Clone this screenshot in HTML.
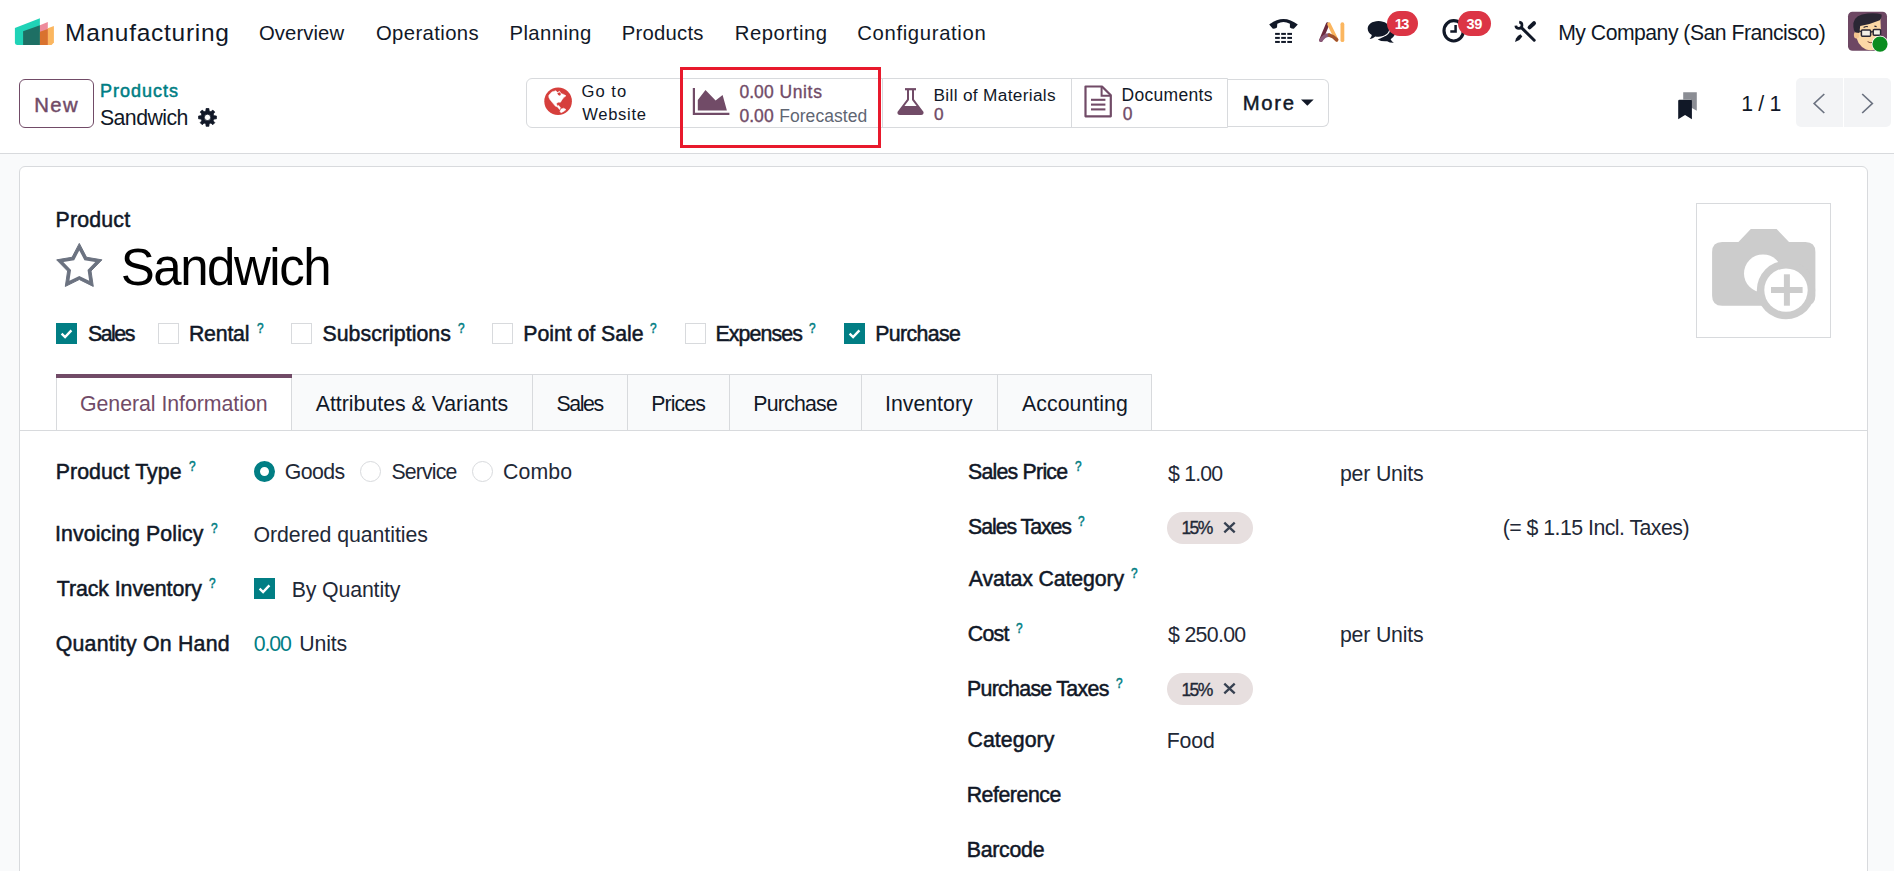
<!DOCTYPE html>
<html lang="en"><head><meta charset="utf-8"><title>Sandwich - Odoo</title>
<style>
html,body{margin:0;padding:0;}
body{width:1894px;height:871px;overflow:hidden;background:#f9fafb;font-family:"Liberation Sans",sans-serif;color:#111827;}
#app{position:relative;width:1894px;height:871px;overflow:hidden;}
.t{position:absolute;white-space:nowrap;line-height:1;}
.abs{position:absolute;box-sizing:border-box;}
svg{position:absolute;overflow:visible;}
.topbar{left:0;top:0;width:1894px;height:154px;background:#fff;border-bottom:1px solid #d8dadd;}
.sheet{left:19px;top:166px;width:1849px;height:720px;background:#fff;border:1px solid #d8dadd;border-radius:6px 6px 0 0;}
.btn-new{left:19px;top:79px;width:75px;height:49px;border:1px solid #714b67;border-radius:6px;background:#fff;}
.statgrp{left:526px;top:78px;width:702px;height:50px;border:1px solid #d8dadd;border-radius:6px 0 0 6px;background:#fff;}
.statdiv{top:78px;width:1px;height:50px;background:#d8dadd;}
.btn-more{left:1228px;top:79px;width:101px;height:48px;border:1px solid #d8dadd;border-left:none;border-radius:0 6px 6px 0;background:#fff;}
.redbox{left:680px;top:67px;width:201px;height:81px;border:3px solid #e8192c;}
.pager{left:1796px;top:78px;width:95px;height:49px;background:#f3f4f6;border-radius:5px;}
.pagerdiv{left:1843px;top:78px;width:1px;height:49px;background:#fff;}
.badge{height:25.3px;border-radius:12.7px;background:#dc3545;}
.cb{width:21px;height:21px;border:1px solid #d8dadd;background:#fff;}
.cb.on{border-color:#017e84;background:#017e84;}
.radio{width:21px;height:21px;border-radius:50%;border:1px solid #d8dadd;background:#fff;}
.radio.on{border:6px solid #017e84;}
.tab{top:374px;height:57px;border:1px solid #d8dadd;background:#f9fafb;}
.tab.active{background:#fff;}
.tabline{left:20px;top:430px;width:1847px;height:1px;background:#d8dadd;}
.pill{height:31.7px;border-radius:16px;background:#e7dfdf;}
.imgbox{left:1696px;top:203px;width:135px;height:135px;border:1px solid #d8dadd;background:#fff;}

</style></head>
<body>
<div id="app">
<div class="abs topbar"></div>
<div class="abs sheet"></div>
<div class="abs btn-new"></div>
<div class="abs statgrp"></div>
<div class="abs statdiv" style="left:882px"></div>
<div class="abs statdiv" style="left:1071px"></div>
<div class="abs btn-more"></div>
<div class="abs redbox"></div>
<div class="abs pager"></div><div class="abs pagerdiv"></div>
<div class="abs cb on" style="left:56px;top:323px"></div><svg style="left:56px;top:323px" width="21" height="21" viewBox="0 0 21 21"><path d="M5.6 10.6 L9.1 14 L15.4 7.4" fill="none" stroke="#fff" stroke-width="2.4" stroke-linecap="butt" stroke-linejoin="miter"/></svg>
<div class="abs cb" style="left:158px;top:323px"></div>
<div class="abs cb" style="left:291px;top:323px"></div>
<div class="abs cb" style="left:492px;top:323px"></div>
<div class="abs cb" style="left:685px;top:323px"></div>
<div class="abs cb on" style="left:844px;top:323px"></div><svg style="left:844px;top:323px" width="21" height="21" viewBox="0 0 21 21"><path d="M5.6 10.6 L9.1 14 L15.4 7.4" fill="none" stroke="#fff" stroke-width="2.4" stroke-linecap="butt" stroke-linejoin="miter"/></svg>
<div class="abs tab active" style="left:56px;width:236px"></div>
<div class="abs tab" style="left:291px;width:242px"></div>
<div class="abs tab" style="left:532px;width:96px"></div>
<div class="abs tab" style="left:627px;width:103px"></div>
<div class="abs tab" style="left:729px;width:133px"></div>
<div class="abs tab" style="left:861px;width:137px"></div>
<div class="abs tab" style="left:997px;width:155px"></div>
<div class="abs tabline"></div>
<div class="abs" style="left:56px;top:374px;width:236px;height:3.7px;background:#714b67"></div>
<div class="abs radio on" style="left:254px;top:461px"></div>
<div class="abs radio" style="left:360px;top:461px"></div>
<div class="abs radio" style="left:472px;top:461px"></div>
<div class="abs cb on" style="left:254px;top:578px"></div><svg style="left:254px;top:578px" width="21" height="21" viewBox="0 0 21 21"><path d="M5.6 10.6 L9.1 14 L15.4 7.4" fill="none" stroke="#fff" stroke-width="2.4" stroke-linecap="butt" stroke-linejoin="miter"/></svg>
<div class="abs pill" style="left:1167px;top:512px;width:86px"></div>
<svg style="left:1222.5px;top:520.5px" width="13" height="13" viewBox="0 0 13 13"><path d="M1.3 1.6 L11.7 11.4 M11.7 1.6 L1.3 11.4" stroke="#374151" stroke-width="2.3" fill="none"/></svg>
<div class="abs pill" style="left:1167px;top:673px;width:86px"></div>
<svg style="left:1222.5px;top:681.5px" width="13" height="13" viewBox="0 0 13 13"><path d="M1.3 1.6 L11.7 11.4 M11.7 1.6 L1.3 11.4" stroke="#374151" stroke-width="2.3" fill="none"/></svg>
<div class="abs imgbox"></div>
<svg style="left:0px;top:0px" width="70" height="60" viewBox="0 0 70 60"><path d="M14.9 28.1 L39.9 18.2 L39.9 44.9 L17 44.9 Q14.9 44.9 14.9 42.8 Z" fill="#1fd3b7"/><polygon points="39.9,25.2 47.8,22.1 47.8,44.9 39.9,44.9" fill="#ee8b9c"/><polygon points="47.8,28.3 53.9,26.1 53.9,42.6 51.6,44.9 47.8,44.9" fill="#fbb65f"/><polygon points="23.1,31.2 39.9,25.2 39.9,44.9 23.1,44.9" fill="#1e6f64"/><polygon points="39.9,31.7 47.8,28.9 47.8,44.9 39.9,44.9" fill="#d9722e"/></svg>
<svg style="left:0px;top:0px" width="1894" height="60" viewBox="0 0 1894 60"><path d="M1269.2 24.6 Q1283.4 13.2 1297.8 24.6 L1293.8 28.8 Q1291.6 28.8 1289.9 27.5 L1289.9 23.8 Q1283.4 20.2 1277.3 23.8 L1277 27.5 Q1275.2 28.8 1272.9 28.8 Z" fill="#111827"/><rect x="1275.1" y="32.9" width="4.7" height="2" fill="#111827"/><rect x="1275.1" y="36.9" width="4.7" height="2" fill="#111827"/><rect x="1275.1" y="40.95" width="4.7" height="2" fill="#111827"/><rect x="1281.2" y="32.9" width="4.7" height="2" fill="#111827"/><rect x="1281.2" y="36.9" width="4.7" height="2" fill="#111827"/><rect x="1281.2" y="40.95" width="4.7" height="2" fill="#111827"/><rect x="1287.3" y="32.9" width="4.7" height="2" fill="#111827"/><rect x="1287.3" y="36.9" width="4.7" height="2" fill="#111827"/><rect x="1287.3" y="40.95" width="4.7" height="2" fill="#111827"/></svg>
<svg style="left:0px;top:0px" width="1894" height="60" viewBox="0 0 1894 60"><path d="M1327.6 24.2 L1320.9 40.2" stroke="#6b2a3d" stroke-width="3.6" stroke-linecap="round" fill="none"/><path d="M1329 24.2 L1336.6 39.8" stroke="#fbb65f" stroke-width="3.6" stroke-linecap="round" fill="none"/><path d="M1320.9 40.2 Q1325 34.6 1329.5 35.2" stroke="#8b5a7a" stroke-width="3.6" stroke-linecap="round" fill="none"/><path d="M1329.5 35.2 Q1333.2 36 1336.6 39.8" stroke="#a0522d" stroke-width="3.6" stroke-linecap="round" fill="none"/><path d="M1342.4 24.2 L1342.4 40.2" stroke="#fbb65f" stroke-width="3.8" stroke-linecap="round" fill="none"/></svg>
<svg style="left:0px;top:0px" width="1894" height="60" viewBox="0 0 1894 60"><path d="M1377.7 39.4 Q1384 37.6 1388.6 31 L1394.6 30 Q1396.6 35.4 1390.6 39.2 Q1391.6 41.4 1393.8 42.8 Q1389.6 42.9 1387.2 41.2 Q1381.6 41.8 1377.7 39.4 Z" fill="#111827"/><ellipse cx="1378.3" cy="29" rx="11.9" ry="9" fill="#fff"/><path d="M1378.5 21 C1385 21 1389.3 24.6 1389.3 28.8 C1389.3 33.2 1384.8 36.7 1378.5 36.7 C1377.4 36.7 1376.2 36.6 1375.2 36.4 C1373.6 37.8 1371.6 38.7 1369.6 38.9 C1370.8 37.8 1371.6 36.4 1371.8 35 C1369.2 33.6 1367.7 31.4 1367.7 28.8 C1367.7 24.6 1372 21 1378.5 21 Z" fill="#111827"/></svg>
<svg style="left:0px;top:0px" width="1894" height="60" viewBox="0 0 1894 60"><ellipse cx="1453.7" cy="30.8" rx="9.7" ry="10.2" fill="none" stroke="#111827" stroke-width="3.2"/><path d="M1455.6 25 L1455.6 31.6 L1450.3 31.6" fill="none" stroke="#111827" stroke-width="2.5"/></svg>
<svg style="left:0px;top:0px" width="1894" height="60" viewBox="0 0 1894 60"><path d="M1522.2 28.4 L1534.2 40.2" stroke="#111827" stroke-width="3.0" stroke-linecap="round" fill="none"/><path d="M1519.2 22.2 A3.1 3.1 0 1 1 1515.8 25.6" stroke="#111827" stroke-width="2.7" fill="none"/><path d="M1529.6 27.4 L1534.0 23.2" stroke="#111827" stroke-width="4.0" stroke-linecap="round" fill="none"/><polygon points="1518.1,35.8 1520.5,34.2 1522.3,36.4 1519.4,39.9 1515,41.9 1516,38.6" fill="#111827"/></svg>
<svg style="left:0px;top:0px" width="1894" height="60" viewBox="0 0 1894 60"><rect x="1848" y="11.8" width="39" height="39" rx="4.5" fill="#6d4763"/><clipPath id="avc"><rect x="1848" y="11.8" width="39" height="39" rx="4.5"/></clipPath><g clip-path="url(#avc)"><path d="M1856 30 Q1855 44 1866 49.5 Q1874 52 1880 46 Q1881.5 38 1880.4 19 L1860 22 Z" fill="#fbd8a6"/><ellipse cx="1856.5" cy="35" rx="2.6" ry="3.6" fill="#f4c48f"/><path d="M1853.4 27 Q1852.4 17 1862 14.4 Q1874 12 1881.6 14.6 Q1882.4 17.5 1879.8 20.2 Q1870 24.4 1860.2 26 L1859.4 33 L1855.4 32.6 Q1853.6 31 1853.4 27 Z" fill="#2a2734"/><rect x="1861.4" y="30" width="9.2" height="6.2" rx="1" fill="#f3efe6" stroke="#2a2734" stroke-width="1.5"/><rect x="1873.2" y="29.6" width="7.4" height="5.6" rx="1" fill="#f3efe6" stroke="#2a2734" stroke-width="1.5"/><path d="M1870.6 32 L1873.2 31.6 M1861.4 31.6 L1857.6 30.6" stroke="#2a2734" stroke-width="1.4" fill="none"/><path d="M1867.6 41.6 Q1870 43.4 1873 42.4" stroke="#7a4a3a" stroke-width="1" fill="none"/><path d="M1863.6 27.6 Q1865.6 26.2 1867.8 26.6 M1874.4 26.2 L1876.6 26.6" stroke="#2a2734" stroke-width="1.2" fill="none"/></g><circle cx="1880" cy="44.1" r="8.4" fill="#fff"/><circle cx="1880" cy="44.1" r="7.6" fill="#0a8c1f"/></svg>
<svg style="left:0px;top:60px" width="300" height="80" viewBox="0 0 300 80"><path d="M205.91 50.99 L206.09 48.51 L208.91 48.51 L209.09 50.99 L210.90 51.75 L212.79 50.12 L214.78 52.11 L213.15 54.00 L213.91 55.81 L216.39 55.99 L216.39 58.81 L213.91 58.99 L213.15 60.80 L214.78 62.69 L212.79 64.68 L210.90 63.05 L209.09 63.81 L208.91 66.29 L206.09 66.29 L205.91 63.81 L204.10 63.05 L202.21 64.68 L200.22 62.69 L201.85 60.80 L201.09 58.99 L198.61 58.81 L198.61 55.99 L201.09 55.81 L201.85 54.00 L200.22 52.11 L202.21 50.12 L204.10 51.75 Z M204.30 57.40 a3.2 3.2 0 1 0 6.4 0 a3.2 3.2 0 1 0 -6.4 0 Z" fill="#111827" fill-rule="evenodd" stroke="#111827" stroke-width="0.8" stroke-linejoin="round"/></svg>
<svg style="left:0px;top:60px" width="700" height="80" viewBox="0 60 700 80"><circle cx="558.1" cy="101.3" r="13.8" fill="#d63f3c"/><polygon points="548.8,95.3 551.8,91.9 555.9,90.7 557.3,92.6 559.6,91.2 561,93.5 563.7,94.4 566,95.8 563.7,97.6 561.9,99.9 560.5,102.2 558.2,102.2 556.4,103.6 557.3,105.9 558.7,105.4 560.5,107.7 559.6,109.6 557.3,106.8 555.5,106.3 553.2,103.6 549.9,99.5 548.8,97.2" fill="#fff" stroke="#fff" stroke-width="0.5" stroke-linejoin="round"/><polygon points="561,109.1 563.7,108.2 566,109.6 563.7,111.4 561,112.8 560,111.4" fill="#fff" stroke="#fff" stroke-width="0.5" stroke-linejoin="round"/><polygon points="557.3,93.2 559.6,92.2 561,94 560,95.8 558.2,95" fill="#d63f3c"/></svg>
<svg style="left:0px;top:60px" width="800" height="80" viewBox="0 60 800 80"><path d="M693.9 88 L693.9 113.8 L729.4 113.8" fill="none" stroke="#714b67" stroke-width="2.2"/><polygon points="697.8,100 705.5,90.1 715.6,100.5 722.6,94.9 726.9,110.6 697.8,110.6" fill="#714b67"/></svg>
<svg style="left:0px;top:60px" width="1000" height="80" viewBox="0 60 1000 80"><path d="M905 89.2 L916 89.2" stroke="#714b67" stroke-width="2.2" fill="none"/><path d="M908 89.2 L908 99.6 L898.6 112 Q897.8 113.9 900 113.9 L921 113.9 Q923.2 113.9 922.4 112 L913 99.6 L913 89.2" fill="none" stroke="#714b67" stroke-width="2" stroke-linejoin="round"/><path d="M903.2 106 L917.8 106 L922.4 112 Q923.2 113.9 921 113.9 L900 113.9 Q897.8 113.9 898.6 112 Z" fill="#714b67"/></svg>
<svg style="left:0px;top:60px" width="1200" height="80" viewBox="0 60 1200 80"><path d="M1085.5 86.5 L1102 86.5 L1110.8 95.3 L1110.8 116.3 L1085.5 116.3 Z" fill="none" stroke="#714b67" stroke-width="2.2" stroke-linejoin="round"/><path d="M1101.6 86.5 L1101.6 95.7 L1110.8 95.7" fill="none" stroke="#714b67" stroke-width="2"/><path d="M1091 99.8 L1105.4 99.8" stroke="#714b67" stroke-width="2.1"/><path d="M1091 104.6 L1105.4 104.6" stroke="#714b67" stroke-width="2.1"/><path d="M1091 109.4 L1105.4 109.4" stroke="#714b67" stroke-width="2.1"/></svg>
<svg style="left:0px;top:60px" width="1400" height="80" viewBox="0 60 1400 80"><polygon points="1301,99.4 1313.7,99.4 1307.35,105.8" fill="#111827"/></svg>
<svg style="left:0px;top:60px" width="1894" height="80" viewBox="0 60 1894 80"><path d="M1683.2 92.2 L1696.8 92.2 L1696.8 110.8 L1691 107.6 L1691 99.6 L1683.2 99.6 Z" fill="#8b8d94"/><path d="M1678.2 101 Q1678.2 99.7 1679.5 99.7 L1690.6 99.7 Q1691.9 99.7 1691.9 101 L1691.9 119.2 L1685.05 115.1 L1678.2 119.2 Z" fill="#111827"/></svg>
<svg style="left:0px;top:60px" width="1894" height="80" viewBox="0 60 1894 80"><path d="M1824.3 94 L1814.2 103.5 L1824.3 113" fill="none" stroke="#6b7280" stroke-width="1.7"/><path d="M1862.2 94 L1872.3 103.5 L1862.2 113" fill="none" stroke="#6b7280" stroke-width="1.7"/></svg>
<svg style="left:0px;top:230px" width="200" height="70" viewBox="0 230 200 70"><path d="M79.30 243.40 L86.53 257.25 L101.94 259.85 L91.00 271.00 L93.29 286.45 L79.30 279.50 L65.31 286.45 L67.60 271.00 L56.66 259.85 L72.07 257.25 Z" fill="#6b7280" stroke="#6b7280" stroke-width="1" stroke-linejoin="round"/><path d="M79.30 250.40 L84.41 260.16 L95.28 262.01 L87.57 269.89 L89.17 280.79 L79.30 275.90 L69.43 280.79 L71.03 269.89 L63.32 262.01 L74.19 260.16 Z" fill="#fff"/></svg>
<svg style="left:1690px;top:200px" width="150" height="140" viewBox="1690 200 150 140"><path d="M1722.1 242 L1738.4 242 L1750.8 228.9 L1776.6 228.9 L1789 242 L1805.4 242 Q1815.4 242 1815.4 252 L1815.4 295.7 Q1815.4 305.7 1805.4 305.7 L1722.1 305.7 Q1712.1 305.7 1712.1 295.7 L1712.1 252 Q1712.1 242 1722.1 242 Z" fill="#ccc"/><circle cx="1763" cy="273.4" r="19" fill="#fff"/><circle cx="1786" cy="290.1" r="29.2" fill="#ccc"/><circle cx="1786" cy="290.1" r="21.7" fill="#fff"/><rect x="1771" y="287" width="31.6" height="6" fill="#ccc"/><rect x="1783.9" y="274.3" width="6" height="31.4" fill="#ccc"/></svg>
<div class="abs badge" style="left:1386.7px;top:11.1px;width:31.3px"></div>
<div class="abs badge" style="left:1458.1px;top:11.1px;width:32.8px"></div>
<span class="t" id="brand" style="left:65.00px;top:21.00px;font-size:24.5px;letter-spacing:0.721px;color:#111827;">Manufacturing</span>
<span class="t" id="m1" style="left:258.96px;top:23.00px;font-size:20.3px;letter-spacing:0.095px;color:#111827;">Overview</span>
<span class="t" id="m2" style="left:375.94px;top:23.00px;font-size:20.3px;letter-spacing:0.390px;color:#111827;">Operations</span>
<span class="t" id="m3" style="left:509.44px;top:23.00px;font-size:20.3px;letter-spacing:0.415px;color:#111827;">Planning</span>
<span class="t" id="m4" style="left:621.72px;top:23.00px;font-size:20.3px;letter-spacing:0.235px;color:#111827;">Products</span>
<span class="t" id="m5" style="left:734.72px;top:23.00px;font-size:20.3px;letter-spacing:0.548px;color:#111827;">Reporting</span>
<span class="t" id="m6" style="left:857.26px;top:23.00px;font-size:20.3px;letter-spacing:0.655px;color:#111827;">Configuration</span>
<span class="t" id="company" style="left:1558.22px;top:22.00px;font-size:21.2px;letter-spacing:-0.505px;color:#111827;">My Company (San Francisco)</span>
<span class="t" id="b13" style="left:1394.68px;top:17.00px;font-size:14.6px;letter-spacing:-1.516px;color:#fff;font-weight:700;">13</span>
<span class="t" id="b39" style="left:1466.48px;top:17.00px;font-size:14.6px;letter-spacing:-0.336px;color:#fff;font-weight:700;">39</span>
<span class="t" id="new" style="left:34.19px;top:95.00px;font-size:20.3px;letter-spacing:1.462px;color:#714b67;-webkit-text-stroke:0.45px #714b67;">New</span>
<span class="t" id="bc1" style="left:99.99px;top:82.00px;font-size:18px;letter-spacing:1.001px;color:#017e84;-webkit-text-stroke:0.5px #017e84;">Products</span>
<span class="t" id="bc2" style="left:99.94px;top:108.00px;font-size:21.3px;letter-spacing:-0.563px;color:#111827;">Sandwich</span>
<span class="t" id="go1" style="left:581.46px;top:84.00px;font-size:16.6px;letter-spacing:1.046px;color:#111827;">Go to</span>
<span class="t" id="go2" style="left:582.26px;top:107.00px;font-size:16.6px;letter-spacing:0.684px;color:#111827;">Website</span>
<span class="t" id="u1a" style="left:739.40px;top:84.00px;font-size:17.5px;letter-spacing:0.054px;color:#714b67;-webkit-text-stroke:0.35px #714b67;">0.00</span>
<span class="t" id="u1b" style="left:779.40px;top:84.00px;font-size:17.5px;letter-spacing:0.657px;color:#714b67;-webkit-text-stroke:0.35px #714b67;">Units</span>
<span class="t" id="u2a" style="left:739.40px;top:108.00px;font-size:17.5px;letter-spacing:0.054px;color:#714b67;-webkit-text-stroke:0.35px #714b67;">0.00</span>
<span class="t" id="u2b" style="left:779.22px;top:108.00px;font-size:17.5px;letter-spacing:0.050px;color:#5f6673;">Forecasted</span>
<span class="t" id="bom1" style="left:933.50px;top:87.00px;font-size:17.25px;letter-spacing:0.322px;color:#111827;">Bill of Materials</span>
<span class="t" id="bom2" style="left:933.88px;top:106.00px;font-size:17.25px;letter-spacing:0.000px;color:#714b67;-webkit-text-stroke:0.35px #714b67;">0</span>
<span class="t" id="doc1" style="left:1121.48px;top:87.00px;font-size:17.5px;letter-spacing:0.320px;color:#111827;">Documents</span>
<span class="t" id="doc2" style="left:1122.65px;top:106.00px;font-size:17.5px;letter-spacing:0.000px;color:#714b67;-webkit-text-stroke:0.35px #714b67;">0</span>
<span class="t" id="more" style="left:1242.68px;top:93.00px;font-size:20.3px;letter-spacing:1.734px;color:#111827;-webkit-text-stroke:0.45px #111827;">More</span>
<span class="t" id="pg" style="left:1741.20px;top:94.00px;font-size:21.3px;letter-spacing:-0.329px;color:#111827;">1 / 1</span>
<span class="t" id="plabel" style="left:55.47px;top:210.00px;font-size:21.3px;letter-spacing:0.214px;color:#111827;-webkit-text-stroke:0.5px #111827;">Product</span>
<span class="t" id="title" style="left:120.74px;top:242.00px;font-size:51px;letter-spacing:-1.461px;color:#000;">Sandwich</span>
<span class="t" id="c1" style="left:87.97px;top:324.00px;font-size:21.3px;letter-spacing:-1.461px;color:#111827;-webkit-text-stroke:0.5px #111827;">Sales</span>
<span class="t" id="c2" style="left:188.95px;top:324.00px;font-size:21.3px;letter-spacing:-0.202px;color:#111827;-webkit-text-stroke:0.5px #111827;">Rental</span>
<span class="t" id="c3" style="left:322.45px;top:324.00px;font-size:21.3px;letter-spacing:0.052px;color:#111827;-webkit-text-stroke:0.5px #111827;">Subscriptions</span>
<span class="t" id="c4" style="left:523.23px;top:324.00px;font-size:21.3px;letter-spacing:-0.033px;color:#111827;-webkit-text-stroke:0.5px #111827;">Point of Sale</span>
<span class="t" id="c5" style="left:715.45px;top:324.00px;font-size:21.3px;letter-spacing:-0.868px;color:#111827;-webkit-text-stroke:0.5px #111827;">Expenses</span>
<span class="t" id="c6" style="left:875.21px;top:324.00px;font-size:21.3px;letter-spacing:-0.624px;color:#111827;-webkit-text-stroke:0.5px #111827;">Purchase</span>
<span class="t" id="t1" style="left:79.98px;top:394.00px;font-size:21.3px;letter-spacing:-0.032px;color:#714b67;">General Information</span>
<span class="t" id="t2" style="left:315.74px;top:394.00px;font-size:21.3px;letter-spacing:-0.008px;color:#111827;">Attributes &amp; Variants</span>
<span class="t" id="t3" style="left:556.44px;top:394.00px;font-size:21.3px;letter-spacing:-1.386px;color:#111827;">Sales</span>
<span class="t" id="t4" style="left:651.22px;top:394.00px;font-size:21.3px;letter-spacing:-0.900px;color:#111827;">Prices</span>
<span class="t" id="t5" style="left:753.20px;top:394.00px;font-size:21.3px;letter-spacing:-0.761px;color:#111827;">Purchase</span>
<span class="t" id="t6" style="left:884.96px;top:394.00px;font-size:21.3px;letter-spacing:0.014px;color:#111827;">Inventory</span>
<span class="t" id="t7" style="left:1021.98px;top:394.00px;font-size:21.3px;letter-spacing:0.059px;color:#111827;">Accounting</span>
<span class="t" id="l1" style="left:55.73px;top:462.00px;font-size:21.3px;letter-spacing:0.060px;color:#111827;-webkit-text-stroke:0.5px #111827;">Product Type</span>
<span class="t" id="r1" style="left:284.74px;top:462.00px;font-size:21.3px;letter-spacing:-0.590px;color:#1f2937;">Goods</span>
<span class="t" id="r2" style="left:391.42px;top:462.00px;font-size:21.3px;letter-spacing:-0.852px;color:#1f2937;">Service</span>
<span class="t" id="r3" style="left:502.98px;top:462.00px;font-size:21.3px;letter-spacing:0.118px;color:#1f2937;">Combo</span>
<span class="t" id="l2" style="left:54.93px;top:524.00px;font-size:21.3px;letter-spacing:0.113px;color:#111827;-webkit-text-stroke:0.5px #111827;">Invoicing Policy</span>
<span class="t" id="v2" style="left:253.52px;top:525.00px;font-size:21.3px;letter-spacing:-0.048px;color:#1f2937;">Ordered quantities</span>
<span class="t" id="l3" style="left:56.73px;top:579.00px;font-size:21.3px;letter-spacing:-0.057px;color:#111827;-webkit-text-stroke:0.5px #111827;">Track Inventory</span>
<span class="t" id="v3" style="left:291.70px;top:580.00px;font-size:21.3px;letter-spacing:-0.135px;color:#1f2937;">By Quantity</span>
<span class="t" id="l4" style="left:55.73px;top:634.00px;font-size:21.3px;letter-spacing:0.228px;color:#111827;-webkit-text-stroke:0.5px #111827;">Quantity On Hand</span>
<span class="t" id="v4a" style="left:253.72px;top:634.00px;font-size:21.3px;letter-spacing:-1.095px;color:#017e84;">0.00</span>
<span class="t" id="v4b" style="left:299.22px;top:634.00px;font-size:21.3px;letter-spacing:-0.148px;color:#1f2937;">Units</span>
<span class="t" id="k1" style="left:967.97px;top:462.00px;font-size:21.3px;letter-spacing:-0.759px;color:#111827;-webkit-text-stroke:0.5px #111827;">Sales Price</span>
<span class="t" id="w1a" style="left:1168.00px;top:464.00px;font-size:21.3px;letter-spacing:-0.813px;color:#1f2937;">$ 1.00</span>
<span class="t" id="w1b" style="left:1339.98px;top:464.00px;font-size:21.3px;letter-spacing:-0.196px;color:#1f2937;">per Units</span>
<span class="t" id="k2" style="left:967.97px;top:517.00px;font-size:21.3px;letter-spacing:-1.040px;color:#111827;-webkit-text-stroke:0.5px #111827;">Sales Taxes</span>
<span class="t" id="w2a" style="left:1181.42px;top:520.00px;font-size:17.5px;letter-spacing:-1.528px;color:#1f2937;-webkit-text-stroke:0.35px #1f2937;">15%</span>
<span class="t" id="w2c" style="left:1502.74px;top:518.00px;font-size:21.3px;letter-spacing:-0.531px;color:#1f2937;">(= $ 1.15 Incl. Taxes)</span>
<span class="t" id="k3" style="left:968.77px;top:569.00px;font-size:21.3px;letter-spacing:-0.118px;color:#111827;-webkit-text-stroke:0.5px #111827;">Avatax Category</span>
<span class="t" id="k4" style="left:967.77px;top:624.00px;font-size:21.3px;letter-spacing:-0.711px;color:#111827;-webkit-text-stroke:0.5px #111827;">Cost</span>
<span class="t" id="w4a" style="left:1168.00px;top:625.00px;font-size:21.3px;letter-spacing:-0.676px;color:#1f2937;">$ 250.00</span>
<span class="t" id="w4b" style="left:1339.98px;top:625.00px;font-size:21.3px;letter-spacing:-0.196px;color:#1f2937;">per Units</span>
<span class="t" id="k5" style="left:966.97px;top:679.00px;font-size:21.3px;letter-spacing:-0.678px;color:#111827;-webkit-text-stroke:0.5px #111827;">Purchase Taxes</span>
<span class="t" id="w5a" style="left:1181.42px;top:682.00px;font-size:17.5px;letter-spacing:-1.528px;color:#1f2937;-webkit-text-stroke:0.35px #1f2937;">15%</span>
<span class="t" id="k6" style="left:967.49px;top:730.00px;font-size:21.3px;letter-spacing:0.076px;color:#111827;-webkit-text-stroke:0.5px #111827;">Category</span>
<span class="t" id="w6" style="left:1166.72px;top:731.00px;font-size:21.3px;letter-spacing:-0.139px;color:#1f2937;">Food</span>
<span class="t" id="k7" style="left:966.69px;top:785.00px;font-size:21.3px;letter-spacing:-0.452px;color:#111827;-webkit-text-stroke:0.5px #111827;">Reference</span>
<span class="t" id="k8" style="left:966.69px;top:840.00px;font-size:21.3px;letter-spacing:-0.240px;color:#111827;-webkit-text-stroke:0.5px #111827;">Barcode</span>
<span class="t" id="q0" style="left:256.54px;top:321.00px;font-size:14.8px;letter-spacing:0.000px;color:#017e84;-webkit-text-stroke:0.55px #017e84;transform:scaleX(0.8);transform-origin:0 0;">?</span>
<span class="t" id="q1" style="left:457.76px;top:321.00px;font-size:14.8px;letter-spacing:0.000px;color:#017e84;-webkit-text-stroke:0.55px #017e84;transform:scaleX(0.8);transform-origin:0 0;">?</span>
<span class="t" id="q2" style="left:649.75px;top:321.00px;font-size:14.8px;letter-spacing:0.000px;color:#017e84;-webkit-text-stroke:0.55px #017e84;transform:scaleX(0.8);transform-origin:0 0;">?</span>
<span class="t" id="q3" style="left:809.00px;top:321.00px;font-size:14.8px;letter-spacing:0.000px;color:#017e84;-webkit-text-stroke:0.55px #017e84;transform:scaleX(0.8);transform-origin:0 0;">?</span>
<span class="t" id="q4" style="left:188.53px;top:459.00px;font-size:14.8px;letter-spacing:0.000px;color:#017e84;-webkit-text-stroke:0.55px #017e84;transform:scaleX(0.8);transform-origin:0 0;">?</span>
<span class="t" id="q5" style="left:211.28px;top:521.00px;font-size:14.8px;letter-spacing:0.000px;color:#017e84;-webkit-text-stroke:0.55px #017e84;transform:scaleX(0.8);transform-origin:0 0;">?</span>
<span class="t" id="q6" style="left:208.99px;top:576.00px;font-size:14.8px;letter-spacing:0.000px;color:#017e84;-webkit-text-stroke:0.55px #017e84;transform:scaleX(0.8);transform-origin:0 0;">?</span>
<span class="t" id="q7" style="left:1074.53px;top:459.00px;font-size:14.8px;letter-spacing:0.000px;color:#017e84;-webkit-text-stroke:0.55px #017e84;transform:scaleX(0.8);transform-origin:0 0;">?</span>
<span class="t" id="q8" style="left:1078.23px;top:514.00px;font-size:14.8px;letter-spacing:0.000px;color:#017e84;-webkit-text-stroke:0.55px #017e84;transform:scaleX(0.8);transform-origin:0 0;">?</span>
<span class="t" id="q9" style="left:1131.02px;top:566.00px;font-size:14.8px;letter-spacing:0.000px;color:#017e84;-webkit-text-stroke:0.55px #017e84;transform:scaleX(0.8);transform-origin:0 0;">?</span>
<span class="t" id="q10" style="left:1015.75px;top:621.00px;font-size:14.8px;letter-spacing:0.000px;color:#017e84;-webkit-text-stroke:0.55px #017e84;transform:scaleX(0.8);transform-origin:0 0;">?</span>
<span class="t" id="q11" style="left:1116.02px;top:676.00px;font-size:14.8px;letter-spacing:0.000px;color:#017e84;-webkit-text-stroke:0.55px #017e84;transform:scaleX(0.8);transform-origin:0 0;">?</span>
</div>
</body></html>
